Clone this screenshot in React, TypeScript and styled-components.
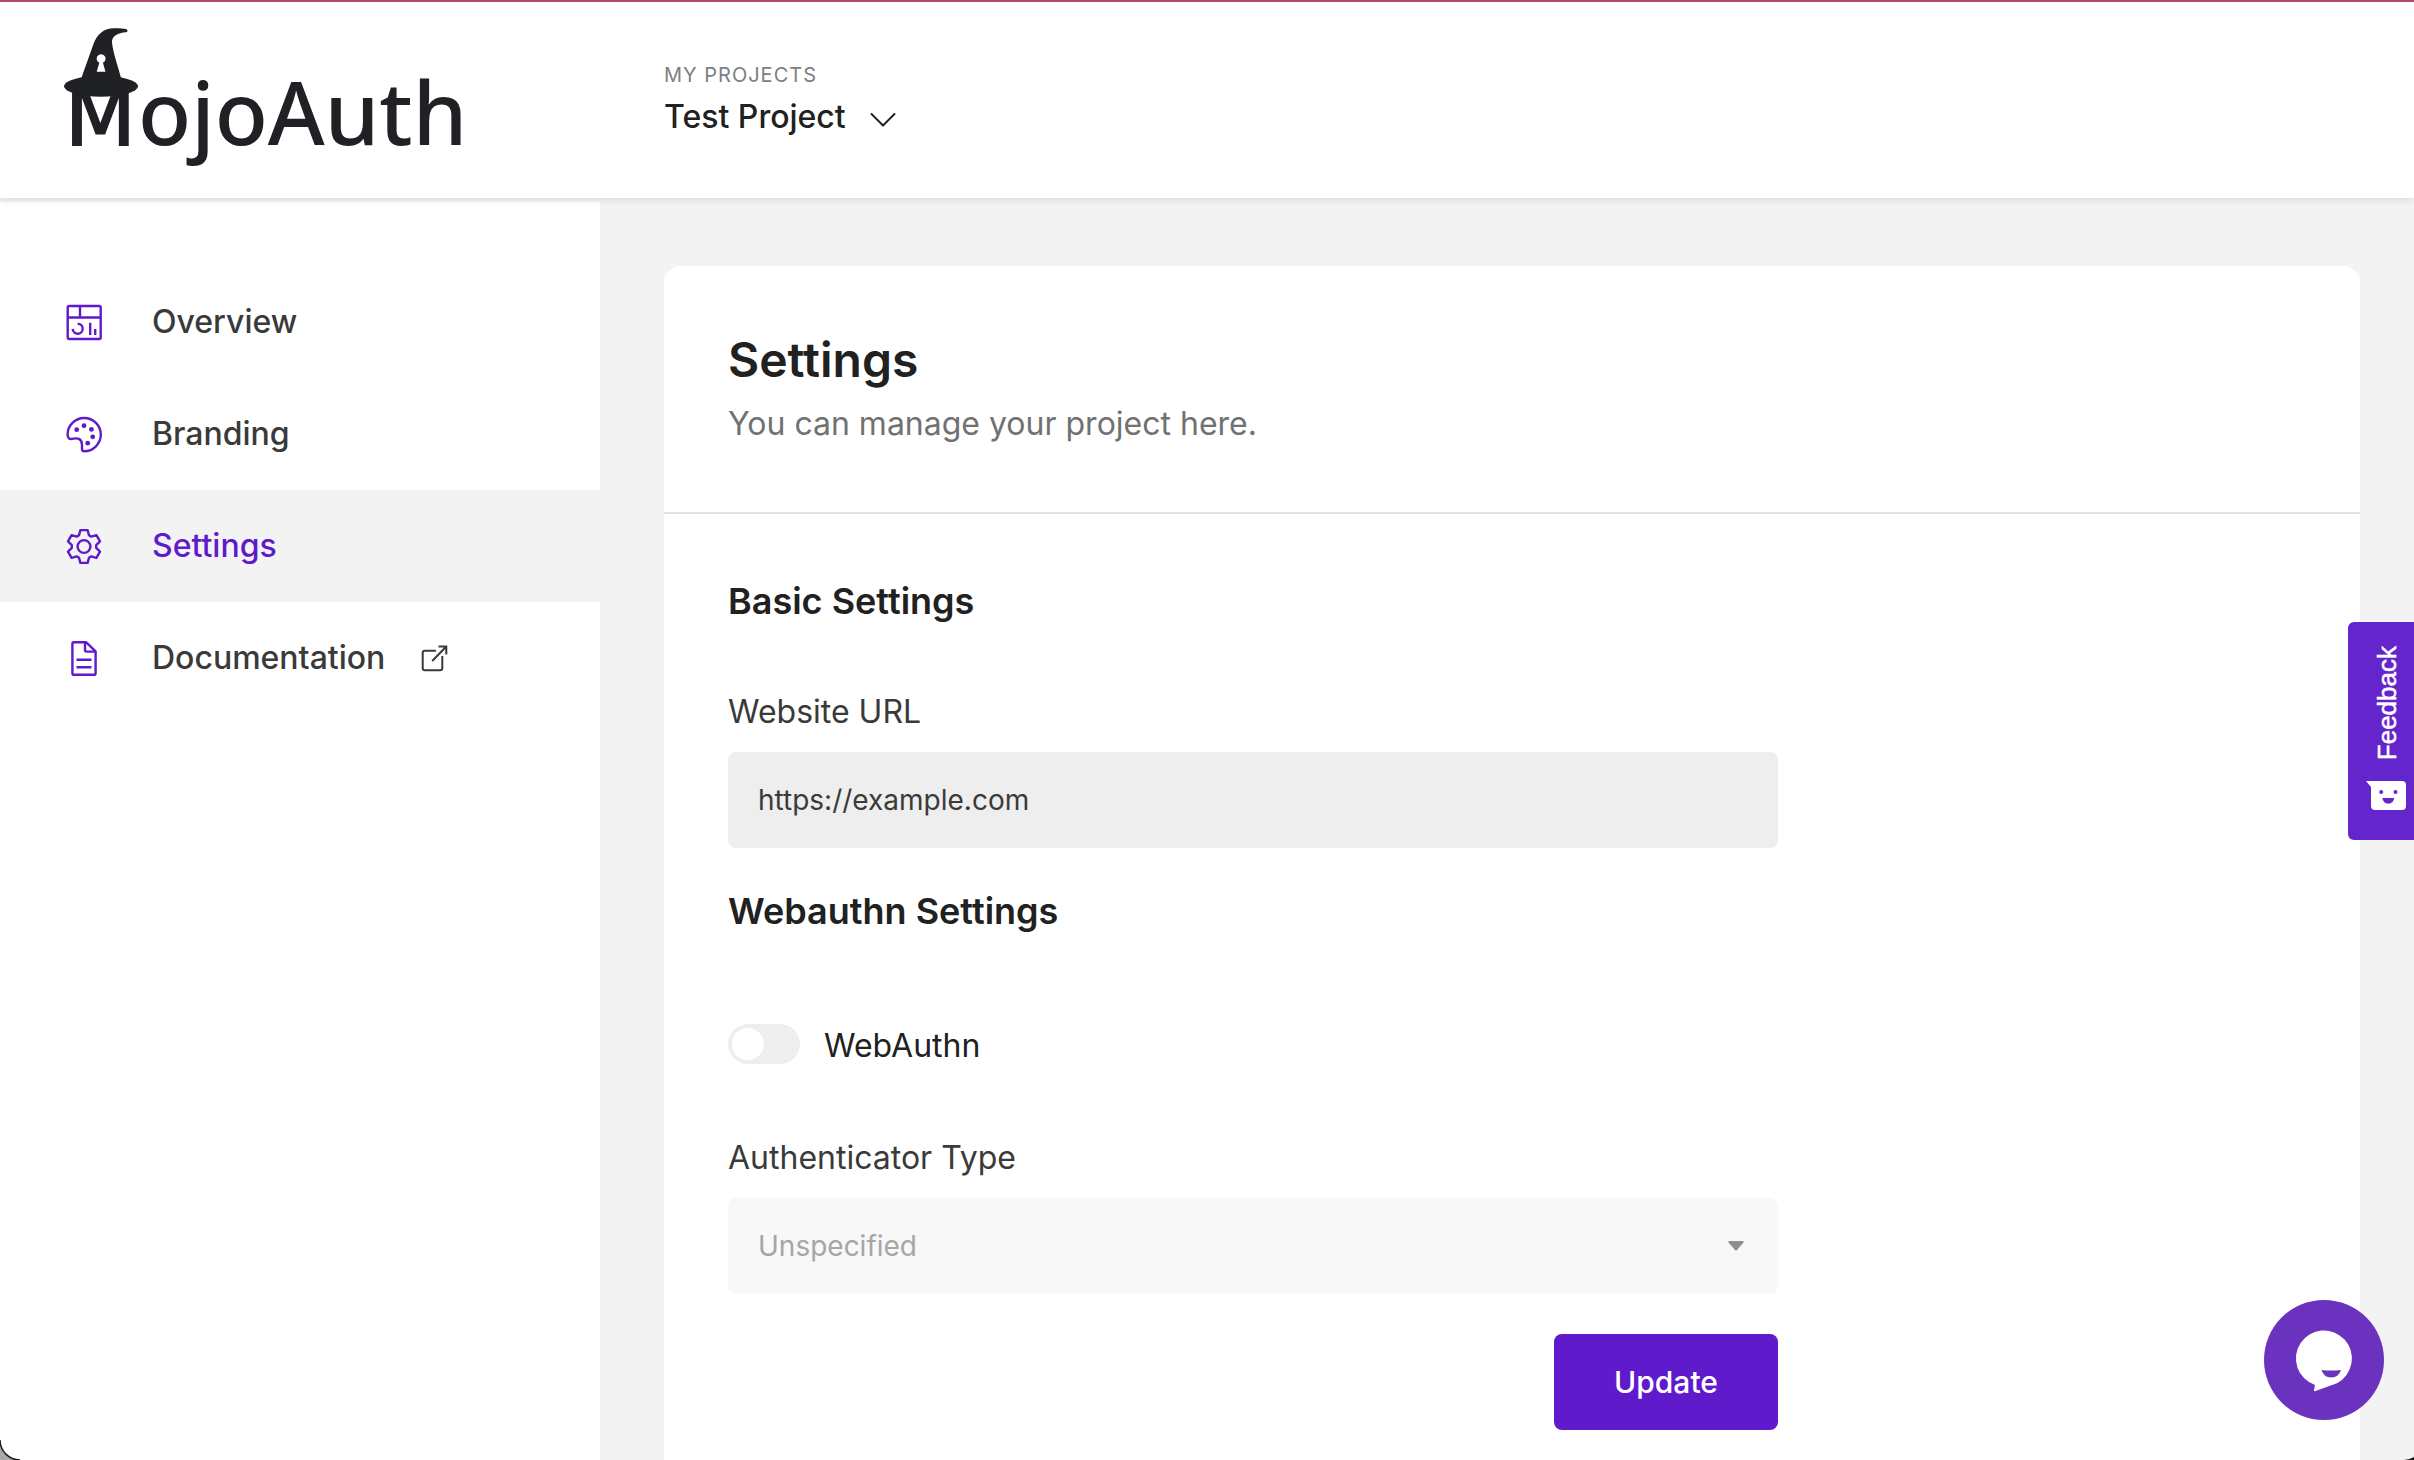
import React, { useState } from "react";
import styled, { createGlobalStyle } from "styled-components";

const color = {
  purple: "#5f1bcb",
  ink: "#212121",
  text: "#3a3a3a",
  muted: "#717171",
  page: "#f3f3f3",
  line: "#dee2e6",
  field: "#eeeeee",
};

const GlobalStyle = createGlobalStyle`
  *, *::before, *::after { box-sizing: border-box; }
  body {
    margin: 0;
    background: ${color.page};
    color: ${color.ink};
    font-family: Inter, "Liberation Sans", sans-serif;
    font-size: 32px;
    line-height: 48px;
  }
  h1, h2, p { margin: 0; }
  button, input, select { font: inherit; }
`;

const Shell = styled.div`
  display: flex;
  flex-direction: column;
  height: 100vh;
  overflow: hidden;
`;

const Header = styled.header`
  position: relative;
  z-index: 1;
  display: flex;
  flex: none;
  align-items: flex-start;
  height: 198px;
  background: #fff;
  border-top: 2px solid #b04a70;
  box-shadow: 0 2px 8px rgba(0, 0, 0, 0.1);
`;

const Brand = styled.a`
  flex: none;
  width: 600px;
  padding: 22px 0 0 64px;
  color: #202124;

  svg {
    display: block;
  }
`;

const Project = styled.div`
  display: flex;
  flex-direction: column;
  align-items: flex-start;
  padding: 61px 64px 0;
`;

const ProjectCaption = styled.span`
  color: #7b8084;
  font-size: 20px;
  line-height: 24px;
  letter-spacing: 1px;
`;

const ProjectButton = styled.button`
  display: flex;
  align-items: center;
  gap: 24px;
  margin-top: 6px;
  padding: 0;
  border: 0;
  background: none;
  color: ${color.ink};
  font-weight: 500;
  cursor: pointer;

  svg {
    margin-top: 6px;
  }
`;

const Body = styled.div`
  display: flex;
  flex: 1;
  min-height: 0;
`;

const Sidebar = styled.nav`
  flex: none;
  width: 600px;
  margin-top: 4px;
  padding-top: 64px;
  background: #fff;
`;

const NavLink = styled.a<{ $active?: boolean }>`
  display: flex;
  align-items: center;
  gap: 48px;
  height: 112px;
  padding-left: 64px;
  background: ${(p) => (p.$active ? color.page : "transparent")};
  color: ${(p) => (p.$active ? color.purple : color.text)};
  font-weight: 500;
  text-decoration: none;
`;

const NavIcon = styled.svg`
  flex: none;
  width: 40px;
  height: 40px;
  fill: none;
  stroke: ${color.purple};
  stroke-width: 2.4;
  stroke-linejoin: round;
`;

const NavLabel = styled.span`
  display: flex;
  align-items: center;
  gap: 35px;
`;

const Main = styled.main`
  flex: 1;
  min-width: 0;
  padding: 68px 54px 64px 64px;
  overflow-y: auto;
  scrollbar-width: none;
`;

const Card = styled.section`
  background: #fff;
  border-radius: 16px;
`;

const CardHeader = styled.div`
  padding: 64px;
  border-bottom: 2px solid ${color.line};
`;

const Title = styled.h1`
  font-size: 48px;
  font-weight: 600;
  line-height: 60px;
`;

const Subtitle = styled.p`
  margin-top: 10px;
  color: ${color.muted};
`;

const Form = styled.form`
  padding: 64px;
`;

const FormColumn = styled.div`
  display: flex;
  flex-direction: column;
  max-width: 1050px;
`;

const SectionTitle = styled.h2<{ $spaced?: boolean }>`
  margin-top: ${(p) => (p.$spaced ? "40px" : "0")};
  margin-bottom: 64px;
  font-size: 36px;
  font-weight: 600;
  line-height: 46px;
`;

const Label = styled.label`
  margin-bottom: 16px;
  color: ${color.text};
`;

const TextInput = styled.input`
  width: 100%;
  height: 96px;
  padding: 0 30px;
  border: 0;
  border-radius: 8px;
  background: ${color.field};
  color: ${color.text};
  font-size: 28px;
`;

const SwitchRow = styled.label`
  display: flex;
  align-items: flex-start;
  gap: 24px;
  margin: 26px 0 66px;
  line-height: 44px;
`;

const Switch = styled.input`
  appearance: none;
  display: flex;
  width: 72px;
  height: 40px;
  margin: 0;
  padding: 4px;
  border-radius: 20px;
  background: ${color.field};

  &::before {
    content: "";
    width: 32px;
    height: 32px;
    border-radius: 50%;
    background: #fff;
  }

  &:checked {
    justify-content: flex-end;
    background: ${color.purple};
  }
`;

const SelectBox = styled.div`
  position: relative;

  svg {
    position: absolute;
    top: 43px;
    right: 34px;
    pointer-events: none;
  }
`;

const Select = styled.select`
  appearance: none;
  display: block;
  width: 100%;
  height: 96px;
  padding: 0 30px;
  border: 0;
  border-radius: 8px;
  background: #f8f8f8;
  color: #a6a6a6;
  font-size: 28px;
  opacity: 1;
`;

const SubmitButton = styled.button`
  align-self: flex-end;
  width: 224px;
  height: 96px;
  margin-top: 40px;
  border: 0;
  border-radius: 8px;
  background: ${color.purple};
  color: #fff;
  font-size: 30px;
  font-weight: 500;
  cursor: pointer;
`;

const FeedbackTab = styled.button`
  position: fixed;
  z-index: 2;
  top: 622px;
  right: 0;
  display: flex;
  flex-direction: column;
  align-items: flex-end;
  justify-content: space-between;
  width: 66px;
  height: 218px;
  padding: 24px 8px 30px 0;
  border: 0;
  border-radius: 6px 0 0 6px;
  background: #6426cc;
  color: #fff;
  cursor: pointer;
`;

const FeedbackText = styled.span`
  margin-right: 4px;
  writing-mode: vertical-rl;
  transform: rotate(180deg);
  font-family: "Liberation Sans", Arial, sans-serif;
  font-size: 26px;
  line-height: 30px;
  -webkit-text-stroke: 0.5px #fff;
`;

const ChatButton = styled.button`
  position: fixed;
  z-index: 2;
  right: 30px;
  bottom: 40px;
  width: 120px;
  height: 120px;
  padding: 0;
  border: 0;
  border-radius: 50%;
  background: #6a32bf;
  cursor: pointer;

  svg {
    display: block;
  }
`;

const Corner = styled.svg<{ $side: "left" | "right" }>`
  position: fixed;
  z-index: 3;
  bottom: 0;
  ${(p) => p.$side}: 0;
`;

function Logo() {
  return (
    <svg width="420" height="160" viewBox="64 24 420 160" fill="currentColor" role="img" aria-label="MojoAuth">
      <text y="145" stroke="currentColor">
        <tspan x="65" fontFamily="DejaVu Sans" fontSize="82" strokeWidth="2">M</tspan>
        <tspan x="138" fontFamily="Noto Sans" fontSize="87" fontWeight="500" strokeWidth="0">ojoAuth</tspan>
      </text>
      <ellipse cx="101" cy="86.3" rx="37" ry="10.5" />
      <path d="M81 79 L93.3 44.5 C97 34 104 28.3 114 28.3 C119 28.2 123 28.5 126 29 C128 29.6 128 31.8 126 32.3 C118 33 111.500 36 112 42.500 C113 53 118 66 121.300 79 Z" />
      <path fill="#fff" d="M99.3 62.800 A4.500 4.500 0 1 1 102.900 62.800 L105.500 71.700 H96.700 Z" />
    </svg>
  );
}

const gearPoints = Array.from({ length: 6 }, (_, tooth) => {
  const angle = ((tooth * 60 - 90) * Math.PI) / 180;
  return [[11.2, -5], [16.4, -3.6], [16.4, 3.6], [11.2, 5]]
    .map(([r, t]) => {
      const x = 20 + r * Math.cos(angle) - t * Math.sin(angle);
      const y = 20.5 + r * Math.sin(angle) + t * Math.cos(angle);
      return `${x.toFixed(1)},${y.toFixed(1)}`;
    })
    .join(" ");
}).join(" ");

const icons = {
  overview: (
    <>
      <rect x="3.700" y="4" width="33" height="33" rx="1.500" />
      <path d="M4 15.500H36.500M16 4V15.500M13.700 21.700A5 5 0 1 1 8.700 26.900M26.200 20.700V33M31.200 27V33" />
    </>
  ),
  branding: (
    <>
      <path d="M20.200 37.200A16.600 16.600 0 1 0 3.600 20.600C3.600 23.800 5.300 25.400 7.800 24.900C13.500 23.500 17.700 24.600 18 30.500V35C18 36.500 18.700 37.200 20.200 37.200Z" />
      <g fill={color.purple} stroke="none">
        <circle cx="12.700" cy="15.700" r="2.400" />
        <circle cx="20" cy="11.700" r="2.400" />
        <circle cx="27.400" cy="15.400" r="2.400" />
        <circle cx="28.700" cy="22.800" r="2.400" />
        <circle cx="23.700" cy="29.200" r="2.400" />
      </g>
    </>
  ),
  settings: (
    <>
      <polygon points={gearPoints} />
      <circle cx="20" cy="20.500" r="6.400" />
    </>
  ),
  docs: (
    <path d="M22 4.200H10Q8.400 4.200 8.400 5.800V35.200Q8.400 36.800 10 36.800H30Q31.600 36.800 31.600 35.200V13.300ZM21 4.200V12Q21 13.600 22.600 13.600H31.600M12.500 21.700H27.500M12.500 29.200H27.500" />
  ),
};

function ExternalIcon() {
  return (
    <svg width="28" height="28" viewBox="0 0 28 28" fill="none" stroke="currentColor" strokeWidth="2" aria-hidden="true">
      <path d="M15.900 6.700H5Q2.700 6.700 2.700 9V24Q2.700 26.300 5 26.300H20Q22.300 26.300 22.300 24V12M12.200 17L26.300 2.500M18.500 2.500H26.300V10.500" />
    </svg>
  );
}

const links: { id: keyof typeof icons; label: string; external?: boolean }[] = [
  { id: "overview", label: "Overview" },
  { id: "branding", label: "Branding" },
  { id: "settings", label: "Settings" },
  { id: "docs", label: "Documentation", external: true },
];

export default function App() {
  const [url, setUrl] = useState("https://example.com");
  const [webauthn, setWebauthn] = useState(false);

  return (
    <>
      <GlobalStyle />
      <Shell>
        <Header>
          <Brand href="#home">
            <Logo />
          </Brand>
          <Project>
            <ProjectCaption>MY PROJECTS</ProjectCaption>
            <ProjectButton type="button">
              Test Project
              <svg width="26" height="16" viewBox="0 0 26 16" fill="none" stroke="currentColor" strokeWidth="2" strokeLinecap="round" strokeLinejoin="round" aria-hidden="true">
                <path d="M1.500 2L13 13.500L24.500 2" />
              </svg>
            </ProjectButton>
          </Project>
        </Header>
        <Body>
          <Sidebar>
            {links.map((link) => (
              <NavLink key={link.id} href={`#${link.id}`} $active={link.id === "settings"}>
                <NavIcon viewBox="0 0 40 40" aria-hidden="true">{icons[link.id]}</NavIcon>
                <NavLabel>
                  {link.label}
                  {link.external && <ExternalIcon />}
                </NavLabel>
              </NavLink>
            ))}
          </Sidebar>
          <Main>
            <Card>
              <CardHeader>
                <Title>Settings</Title>
                <Subtitle>You can manage your project here.</Subtitle>
              </CardHeader>
              <Form onSubmit={(e) => e.preventDefault()}>
                <FormColumn>
                  <SectionTitle>Basic Settings</SectionTitle>
                  <Label htmlFor="website-url">Website URL</Label>
                  <TextInput id="website-url" value={url} onChange={(e) => setUrl(e.target.value)} />
                  <SectionTitle $spaced>Webauthn Settings</SectionTitle>
                  <SwitchRow>
                    <Switch type="checkbox" checked={webauthn} onChange={(e) => setWebauthn(e.target.checked)} />
                    WebAuthn
                  </SwitchRow>
                  <Label htmlFor="authenticator-type">Authenticator Type</Label>
                  <SelectBox>
                    <Select id="authenticator-type" disabled={!webauthn}>
                      <option>Unspecified</option>
                    </Select>
                    <svg width="16" height="10" viewBox="0 0 16 10" fill="#8f8f8f" aria-hidden="true">
                      <path d="M1.500 0H14.500Q16.500 0 15.300 1.800L8.800 9.300Q8 10.200 7.200 9.300L0.700 1.800Q-0.500 0 1.500 0Z" />
                    </svg>
                  </SelectBox>
                  <SubmitButton type="submit">Update</SubmitButton>
                </FormColumn>
              </Form>
            </Card>
          </Main>
        </Body>
      </Shell>
      <FeedbackTab type="button">
        <FeedbackText>Feedback</FeedbackText>
        <svg width="40" height="29" viewBox="0 0 40 29" aria-hidden="true">
          <path fill="#fff" d="M0 0H36Q40 0 40 4V25Q40 29 36 29H9Q5 29 5 25V6Z" />
          <g fill="#6426cc">
            <circle cx="15.200" cy="11" r="2" />
            <circle cx="29.500" cy="11" r="2" />
            <path d="M16.300 17H28.300Q27.300 22.700 22.300 22.700T16.300 17Z" />
          </g>
        </svg>
      </FeedbackTab>
      <ChatButton type="button" aria-label="Open chat">
        <svg width="120" height="120" viewBox="0 0 120 120" aria-hidden="true">
          <path fill="#fff" d="M51 85A28 28 0 1 1 73 83.200L51.500 91Q49.500 91.600 50 90Z" />
          <path fill="#6a32bf" d="M57.500 70Q67 71.200 77 70Q74.500 77.500 67.200 77.500T57.500 70Z" />
        </svg>
      </ChatButton>
      <Corner $side="left" width="20" height="20" viewBox="0 0 20 20" aria-hidden="true">
        <path d="M0 0A20 20 0 0 0 20 20H0Z" fill="#a9a9a9" />
        <path d="M0 0A20 20 0 0 0 20 20" fill="none" stroke="#1a1a1a" strokeWidth="1.500" />
      </Corner>
      <Corner $side="right" width="10" height="3" viewBox="0 0 10 3" aria-hidden="true">
        <path d="M10 0A20 20 0 0 1 0 3H10Z" fill="#111" />
      </Corner>
    </>
  );
}
